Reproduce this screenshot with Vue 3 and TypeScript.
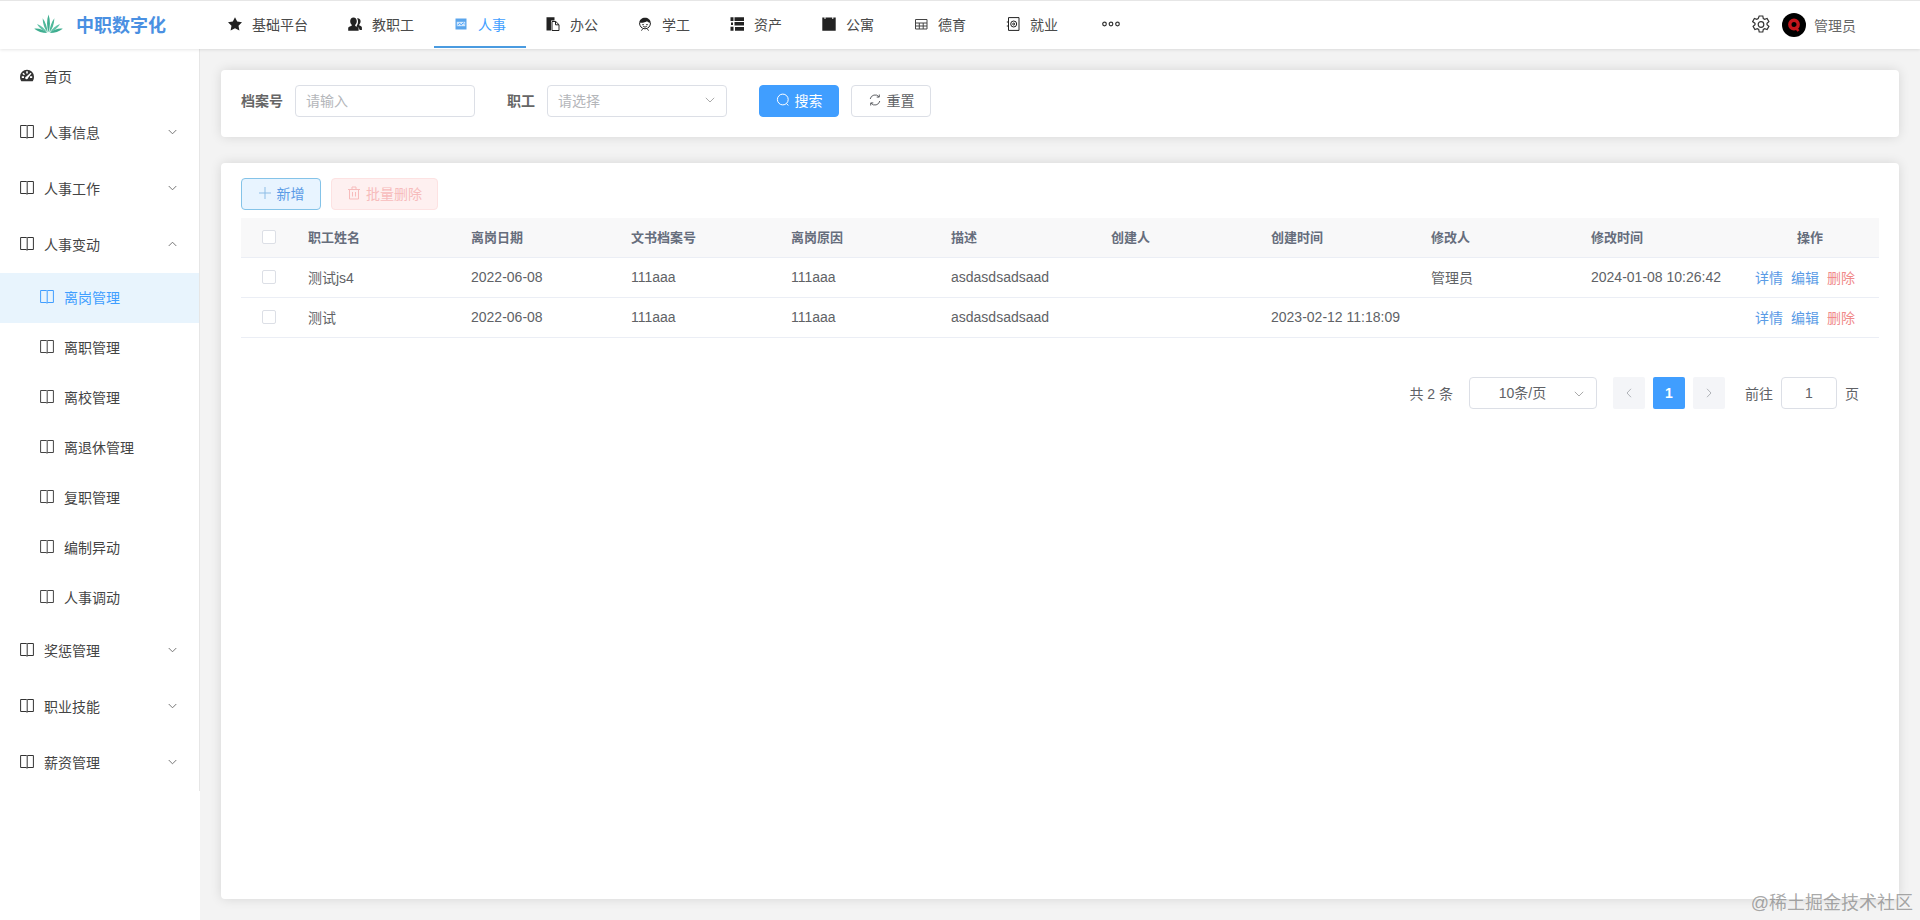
<script setup lang="ts">
interface IconPart {
  d: string
  stroke?: boolean
  color?: string
}

interface NavItem {
  label: string
  icon: string
  active?: boolean
}

interface SideItem {
  label: string
  icon?: string
  arrow?: 'up' | 'down'
  children?: { label: string; active?: boolean }[]
}

interface Row {
  name: string
  leaveDate: string
  archive: string
  reason: string
  desc: string
  creator: string
  createdAt: string
  editor: string
  editedAt: string
}

const icons: Record<string, IconPart[]> = {
  star: [{ d: 'M7 .2l2.200 4.400 4.800.7-3.500 3.400.9 4.900L7 11.300l-4.400 2.300.9-4.900L0 5.300l4.800-.7z' }],
  users: [
    { d: 'M5.500.5c2 0 3.300 1.500 3.300 3.600 0 1.600-.6 2.900-1.600 3.800v1c1.800.5 3.400 1.300 3.400 2.300v2.500H.2V11c0-1 1.700-1.800 3.500-2.300V7.800C2.700 7 2.200 5.700 2.200 4.100 2.200 2 3.500.5 5.500.5z' },
    { d: 'M9.700 1.200c1.800 0 2.900 1.300 2.900 3.100 0 1.300-.5 2.500-1.300 3.200v1c1.200.4 2.600 1.100 2.600 2v2.600h-2.300c0-1.700-1.100-2.700-2.800-3.400V8.400c.8-.9 1.200-2.400 1.200-4 0-1.100-.3-2.200-1-2.900z' },
  ],
  hr: [
    { d: 'M1.500 1.500h11v11h-11z', color: '#5aa5ec' },
    { d: 'M2.800 4.800h8.400v4.400H2.800z', color: '#d5e9fc' },
    { d: 'M3.500 8.300l2-2 1.800 1.500 2-2 1.300 1.200', stroke: true, color: '#409eff' },
  ],
  office: [
    { d: 'M.5.300h8v3.200H5v10H.5z' },
    { d: 'M6 4.500h3.800L13 7.700v5.800H6zM9.500 4.500v3.300H13', stroke: true },
  ],
  student: [
    { d: 'M7 .8c3 0 5.500 2 5.800 5-1.500.2-3-.5-3.800-1.500-1 1-4 1.700-7.800 1.500C1.500 2.800 4 .8 7 .8z' },
    { d: 'M1.500 5.800c0 3.400 2.200 6 5.500 6s5.500-2.600 5.500-6M4.500 12.100l-1 1.500M9.500 12.100l1 1.500M5.300 9.400c1 .8 2.400.8 3.400 0', stroke: true },
    { d: 'M4.400 7h1.300v1.300H4.400zM8.300 7h1.300v1.300H8.300z' },
  ],
  assets: [{ d: 'M.5.300h3v3.700h-3zM4.500.300h9.500v3.700H4.500zM1 5.500h2v2.500H1zM4.500 5h9.500v3.500H4.500zM.5 9.800h3v3.900h-3zM5 10h9v3.700H5z' }],
  dorm: [{ d: 'M.3.600h2.200v1.400h1V.6h6.800v1.400h1V.6h2.400v13.200H.3z' }],
  moral: [{ d: 'M1.500 2.500h11.500v9.500H1.500zM1.500 6h11.500M1.500 9h11.500M5.300 6v6M9.200 6v6', stroke: true, color: '#444' }],
  job: [
    { d: 'M2.500.6h10.500v12.800H2.500zM.8 5h2.200M.8 9h2.200', stroke: true },
    { d: 'M7.700 4a3 3 0 1 1 0 6 3 3 0 0 1 0-6zM7.700 6a1 1 0 1 0 0 2 1 1 0 0 0 0-2z', stroke: true },
  ],
  gauge: [
    { d: 'M7 .8a7 7 0 0 1 7 7c0 1.800-.5 3.200-1.300 4.400H1.300A7 7 0 0 1 0 7.800 7 7 0 0 1 7 .8z' },
    { d: 'M6.200 2.300h1.600v2.200H6.200zM1.800 7.300h2.200v1.600H1.800zM10 7.300h2.200v1.600H10zM3.400 3.700l1.600 1.500-1 1.100-1.600-1.500zM10.600 3.700l.9.900-3.500 4.400a1.400 1.400 0 1 1-1.600-1.500z', color: '#fff' },
  ],
  book: [
    { d: 'M.6.500h5.800c.3 0 .5.100.6.300.1-.2.300-.3.600-.3h5.800v12H8c-.5 0-.8.200-1 .8-.2-.6-.5-.8-1-.8H.6zM7.200 1v11.800', stroke: true },
  ],
}

const navItems: NavItem[] = [
  { label: '基础平台', icon: 'star' },
  { label: '教职工', icon: 'users' },
  { label: '人事', icon: 'hr', active: true },
  { label: '办公', icon: 'office' },
  { label: '学工', icon: 'student' },
  { label: '资产', icon: 'assets' },
  { label: '公寓', icon: 'dorm' },
  { label: '德育', icon: 'moral' },
  { label: '就业', icon: 'job' },
]

const sideItems: SideItem[] = [
  { label: '首页', icon: 'gauge' },
  { label: '人事信息', arrow: 'down' },
  { label: '人事工作', arrow: 'down' },
  {
    label: '人事变动',
    arrow: 'up',
    children: [
      { label: '离岗管理', active: true },
      { label: '离职管理' },
      { label: '离校管理' },
      { label: '离退休管理' },
      { label: '复职管理' },
      { label: '编制异动' },
      { label: '人事调动' },
    ],
  },
  { label: '奖惩管理', arrow: 'down' },
  { label: '职业技能', arrow: 'down' },
  { label: '薪资管理', arrow: 'down' },
]

const columns = ['职工姓名', '离岗日期', '文书档案号', '离岗原因', '描述', '创建人', '创建时间', '修改人', '修改时间']

const rows: Row[] = [
  {
    name: '测试js4',
    leaveDate: '2022-06-08',
    archive: '111aaa',
    reason: '111aaa',
    desc: 'asdasdsadsaad',
    creator: '',
    createdAt: '',
    editor: '管理员',
    editedAt: '2024-01-08 10:26:42',
  },
  {
    name: '测试',
    leaveDate: '2022-06-08',
    archive: '111aaa',
    reason: '111aaa',
    desc: 'asdasdsadsaad',
    creator: '',
    createdAt: '2023-02-12 11:18:09',
    editor: '',
    editedAt: '',
  },
]

const rowCells = (row: Row) => [
  row.name,
  row.leaveDate,
  row.archive,
  row.reason,
  row.desc,
  row.creator,
  row.createdAt,
  row.editor,
  row.editedAt,
]
</script>

<template>
  <div class="page">
    <header class="topbar">
      <div class="brand">
        <svg class="brand-logo" viewBox="0 0 30 20">
          <path d="M15 19.500C13 13 13 6 15 .5c2 5.500 2 12.500 0 19z" fill="#3fae90" />
          <path d="M14.200 19.500C11 16 9 11 8.800 4.500c2.800 3.500 4.700 9 5.400 15z" fill="#4fb89a" />
          <path d="M15.800 19.500c3.200-3.500 5.200-8.500 5.400-15-2.800 3.500-4.700 9-5.400 15z" fill="#4fb89a" />
          <path d="M13.800 19.700C9.500 18 5 14.500 3 10.500c4.500 2 8.200 5 10.800 9.200z" fill="#62c2a8" />
          <path d="M16.200 19.700c4.300-1.700 8.800-5.200 10.800-9.200-4.500 2-8.200 5-10.800 9.200z" fill="#62c2a8" />
          <path d="M13.500 20C8.500 20 3.500 18.300 0 15.500c5-.6 9.800 1.200 13.500 4.500z" fill="#3fae90" />
          <path d="M16.500 20c5 0 10-1.700 13.500-4.500-5-.6-9.800 1.200-13.500 4.500z" fill="#3fae90" />
        </svg>
        <span class="brand-name">中职数字化</span>
      </div>
      <nav class="nav">
        <a v-for="item in navItems" :key="item.label" class="nav-item" :class="{ active: item.active }">
          <svg class="icon" viewBox="0 0 14 14">
            <path
              v-for="part in icons[item.icon]"
              :key="part.d"
              :d="part.d"
              :fill="part.stroke ? 'none' : part.color || 'currentColor'"
              :stroke="part.stroke ? part.color || 'currentColor' : 'none'"
              fill-rule="evenodd"
            />
          </svg>
          <span>{{ item.label }}</span>
        </a>
        <a class="nav-item">
          <svg class="more" viewBox="0 0 18 6">
            <circle cx="2.500" cy="3" r="1.800" />
            <circle cx="9" cy="3" r="1.800" />
            <circle cx="15.500" cy="3" r="1.800" />
          </svg>
        </a>
      </nav>
      <div class="user">
        <svg class="gear" viewBox="0 0 18 20">
          <path d="M7.200 1h3.600l.5 2.500 1.400.8 2.400-.8 1.800 3.100-1.900 1.700v1.400l1.900 1.700-1.800 3.100-2.400-.8-1.400.8-.5 2.500H7.200l-.5-2.500-1.400-.8-2.400.8-1.800-3.100 1.900-1.700V8.300L.6 6.600l1.800-3.100 2.400.8 1.400-.8z" />
          <circle cx="9" cy="9.500" r="2.800" />
        </svg>
        <svg class="avatar" viewBox="0 0 24 24">
          <circle cx="12" cy="12" r="12" fill="#000" />
          <circle cx="12" cy="11.500" r="4.200" fill="none" stroke="#c4161c" stroke-width="3.400" />
          <path d="M13 14l3.500 4" stroke="#c4161c" stroke-width="2.500" />
        </svg>
        <span class="user-name">管理员</span>
      </div>
    </header>

    <div class="body">
      <aside class="aside">
        <ul class="menu">
          <template v-for="item in sideItems" :key="item.label">
            <li class="menu-item">
              <svg class="icon" viewBox="0 0 14 14">
                <path
                  v-for="part in icons[item.icon || 'book']"
                  :key="part.d"
                  :d="part.d"
                  :fill="part.stroke ? 'none' : part.color || 'currentColor'"
                  :stroke="part.stroke ? part.color || 'currentColor' : 'none'"
                  fill-rule="evenodd"
                />
              </svg>
              <span>{{ item.label }}</span>
              <svg v-if="item.arrow" class="arrow" :class="{ up: item.arrow === 'up' }" viewBox="0 0 10 6">
                <path d="M.8.8L5 5l4.200-4.200" />
              </svg>
            </li>
            <li
              v-for="child in item.children"
              :key="child.label"
              class="menu-child"
              :class="{ active: child.active }"
            >
              <svg class="icon" viewBox="0 0 14 14">
                <path v-for="part in icons.book" :key="part.d" :d="part.d" fill="none" stroke="currentColor" />
              </svg>
              <span>{{ child.label }}</span>
            </li>
          </template>
        </ul>
      </aside>

      <main class="main">
        <section class="card search-card">
          <label class="field-label">档案号</label>
          <div class="input input-wide">请输入</div>
          <label class="field-label field-gap">职工</label>
          <div class="input input-wide">
            请选择
            <svg class="arrow select-arrow" viewBox="0 0 10 6"><path d="M.8.8L5 5l4.200-4.200" /></svg>
          </div>
          <button class="btn btn-primary search-btn">
            <svg class="btn-icon" viewBox="0 0 14 14">
              <circle cx="6.800" cy="6.500" r="5.400" />
              <path d="M10.500 10.500l1.800 2" />
            </svg>
            搜索
          </button>
          <button class="btn">
            <svg class="btn-icon" viewBox="0 0 14 14">
              <path d="M2.200 6A5 5 0 0 1 11 3.800M11.800 8A5 5 0 0 1 3 10.200M11.300 1.500v2.600H8.700M2.700 12.500V9.900h2.600" />
            </svg>
            重置
          </button>
        </section>

        <section class="card table-card">
          <div class="toolbar">
            <button class="btn btn-add">
              <svg class="btn-icon" viewBox="0 0 14 14"><path d="M7 1v12M1 7h12" /></svg>
              新增
            </button>
            <button class="btn btn-danger" disabled>
              <svg class="btn-icon" viewBox="0 0 14 14">
                <path d="M2.500 3.500h9v9.500h-9zM1 3.500h12M5 3.500V1h4v2.500M5.500 6v4.500M8.500 6v4.500" />
              </svg>
              批量删除
            </button>
          </div>

          <table class="table">
            <colgroup>
              <col class="col-check" />
              <col class="col-name" />
              <col v-for="n in 8" :key="n" class="col-text" />
              <col />
            </colgroup>
            <thead>
              <tr>
                <th class="cell-check"><span class="checkbox" /></th>
                <th v-for="col in columns" :key="col">{{ col }}</th>
                <th class="cell-ops">操作</th>
              </tr>
            </thead>
            <tbody>
              <tr v-for="row in rows" :key="row.name">
                <td class="cell-check"><span class="checkbox" /></td>
                <td v-for="(cell, i) in rowCells(row)" :key="i">{{ cell }}</td>
                <td class="ops">
                  <a class="link">详情</a>
                  <a class="link">编辑</a>
                  <a class="link link-danger">删除</a>
                </td>
              </tr>
            </tbody>
          </table>

          <div class="pagination">
            <span>共 2 条</span>
            <div class="input page-size">
              10条/页
              <svg class="arrow select-arrow" viewBox="0 0 10 6"><path d="M.8.8L5 5l4.200-4.200" /></svg>
            </div>
            <div class="pager">
              <span class="page-btn">
                <svg class="page-arrow" viewBox="0 0 6 10"><path d="M5 .8L1 5l4 4.200" /></svg>
              </span>
              <span class="page-btn current">1</span>
              <span class="page-btn">
                <svg class="page-arrow" viewBox="0 0 6 10"><path d="M1 .8L5 5 1 9.200" /></svg>
              </span>
            </div>
            <span class="jump-label">前往</span>
            <div class="input page-input">1</div>
            <span>页</span>
          </div>
        </section>
      </main>
    </div>

    <div class="watermark">@稀土掘金技术社区</div>
  </div>
</template>

<style>
html,
body {
  margin: 0;
  background: #f3f3f3;
}
</style>

<style scoped>
.page {
  position: relative;
  display: flex;
  flex-direction: column;
  height: 920px;
  overflow: hidden;
  font-family: 'Liberation Sans', 'Noto Sans CJK SC', sans-serif;
  font-size: 14px;
  color: #606266;
}

.topbar {
  display: flex;
  align-items: flex-start;
  flex: none;
  height: 48px;
  background: #fff;
  border-top: 1px solid #e6e6e6;
  box-shadow: 0 1px 3px rgba(0, 0, 0, 0.1);
  position: relative;
  z-index: 2;
}

.brand {
  display: flex;
  align-items: center;
  width: 208px;
  height: 47px;
  padding: 0 0 2px 34px;
  box-sizing: border-box;
}

.brand-logo {
  width: 29px;
  height: 19px;
}

.brand-name {
  margin-left: 13px;
  font-size: 18px;
  font-weight: 700;
  color: #4a90e2;
  white-space: nowrap;
}

.nav {
  display: flex;
}

.nav-item {
  display: flex;
  align-items: center;
  gap: 10px;
  height: 45px;
  padding: 0 20px;
  border-bottom: 2px solid transparent;
  color: #4a4a4a;
}

.nav-item .icon {
  color: #222;
}

.nav-item.active {
  color: #409eff;
  border-bottom-color: #4a9be0;
}

.icon {
  flex: none;
  width: 14px;
  height: 14px;
}

.more {
  width: 18px;
  height: 6px;
  margin-left: 4px;
  fill: none;
  stroke: #333;
  stroke-width: 1.200;
}

.user {
  display: flex;
  align-items: center;
  margin-left: auto;
  height: 47px;
  padding-right: 64px;
}

.gear {
  width: 18px;
  height: 20px;
  fill: none;
  stroke: #333;
  stroke-width: 1.200;
}

.avatar {
  width: 24px;
  height: 24px;
  margin-left: 12px;
}

.user-name {
  margin-left: 8px;
  color: #666;
}

.body {
  display: flex;
  flex: 1;
  min-height: 0;
}

.aside {
  flex: none;
  width: 200px;
  background: #fff;
}

.menu {
  width: 200px;
  margin: 0;
  padding: 0;
  list-style: none;
  border-right: 1px solid #e6e6e6;
  box-sizing: border-box;
}

.menu-item,
.menu-child {
  display: flex;
  align-items: center;
  gap: 10px;
  color: #444;
  box-sizing: border-box;
}

.menu-item {
  height: 56px;
  padding: 0 22px 2px 20px;
}

.menu-child {
  height: 50px;
  padding: 0 0 2px 40px;
}

.menu-child.active {
  color: #409eff;
  background: #e8f4fd;
}

.menu-item .icon {
  color: #333;
}

.arrow {
  width: 9px;
  height: 6px;
  margin-left: auto;
  fill: none;
  stroke: #666;
  stroke-width: 1;
}

.arrow.up {
  transform: rotate(180deg);
}

.main {
  flex: 1;
  min-width: 0;
  display: flex;
  flex-direction: column;
  gap: 26px;
  padding: 21px;
  background: #f3f3f3;
}

.card {
  background: #fff;
  border-radius: 4px;
  box-shadow: 0 0 12px rgba(0, 0, 0, 0.12);
}

.search-card {
  display: flex;
  align-items: center;
  height: 67px;
  padding: 15px 20px 20px;
  box-sizing: border-box;
}

.field-label {
  margin-right: 12px;
  padding-bottom: 2px;
  font-weight: 700;
  color: #666;
}

.field-gap {
  margin-left: 32px;
}

.input {
  display: flex;
  align-items: center;
  height: 32px;
  border: 1px solid #dcdfe6;
  border-radius: 4px;
  box-sizing: border-box;
  background: #fff;
}

.input-wide {
  width: 180px;
  padding: 0 11px 2px 10px;
  color: #b4b6ba;
}

.select-arrow {
  margin-left: auto;
  width: 10px;
  stroke: #aaa;
}

.btn {
  display: inline-flex;
  align-items: center;
  justify-content: center;
  gap: 5px;
  width: 80px;
  height: 32px;
  padding: 0 0 2px;
  border: 1px solid #dcdfe6;
  border-radius: 4px;
  background: #fff;
  color: #606266;
  font: inherit;
}

.btn-icon {
  width: 14px;
  height: 14px;
  fill: none;
  stroke: currentColor;
  stroke-width: 1;
}

.btn-primary {
  background: #409eff;
  border-color: #409eff;
  color: #fff;
}

.search-btn {
  margin-left: 32px;
  margin-right: 12px;
}

.table-card {
  flex: 1;
  min-height: 0;
  padding: 15px 20px;
}

.toolbar {
  display: flex;
  gap: 10px;
  margin-bottom: 8px;
}

.btn-add {
  background: #e8f4ff;
  border-color: #84c3e8;
  color: #5a9be6;
}

.btn-add .btn-icon {
  color: #8dbde6;
}

.btn-danger {
  width: 107px;
  background: #fef0f0;
  border-color: #fde2e2;
  color: #f7bcbc;
}

.table {
  width: 1638px;
  border-collapse: collapse;
  table-layout: fixed;
}

.col-check {
  width: 57px;
}

.col-name {
  width: 163px;
}

.col-text {
  width: 160px;
}

.table th,
.table td {
  height: 40px;
  box-sizing: border-box;
  padding: 0 0 1px 10px;
  text-align: left;
  border-bottom: 1px solid #ebeef5;
  white-space: nowrap;
  overflow: hidden;
}

.table th {
  height: 39px;
  padding-bottom: 2px;
  background: #f8f8f9;
  font-size: 13px;
  font-weight: 700;
  color: #666d7c;
}

.table .cell-check {
  padding: 0 0 0 21px;
}

.table .cell-ops {
  text-align: center;
  padding: 0 0 2px;
}

.checkbox {
  display: block;
  width: 14px;
  height: 14px;
  border: 1px solid #dcdfe6;
  border-radius: 2px;
  box-sizing: border-box;
  background: #fff;
}

.table .ops {
  padding-left: 14px;
}

.link {
  color: #5a9be6;
  margin-right: 8px;
}

.link-danger {
  color: #f08a8a;
  margin-right: 0;
}

.pagination {
  display: flex;
  align-items: center;
  justify-content: flex-end;
  margin-top: 39px;
  padding-right: 20px;
  height: 32px;
}

.page-size {
  position: relative;
  justify-content: center;
  width: 128px;
  margin-left: 16px;
  padding: 0 21px 2px 0;
  color: #606266;
}

.page-size .select-arrow {
  position: absolute;
  right: 12px;
  top: 13px;
}

.pager {
  display: flex;
  gap: 8px;
  margin-left: 16px;
}

.page-btn {
  display: flex;
  align-items: center;
  justify-content: center;
  width: 32px;
  height: 32px;
  border-radius: 2px;
  background: #f4f5f8;
  box-sizing: border-box;
}

.page-btn.current {
  background: #409eff;
  color: #fff;
  font-weight: 700;
}

.page-arrow {
  width: 6px;
  height: 10px;
  fill: none;
  stroke: #b0b3b8;
  stroke-width: 1;
}

.jump-label {
  margin-left: 20px;
  margin-right: 8px;
}

.page-input {
  justify-content: center;
  width: 56px;
  margin-right: 8px;
}

.watermark {
  position: absolute;
  right: 7px;
  bottom: 6px;
  font-size: 18px;
  line-height: 22px;
  color: rgba(120, 120, 120, 0.65);
  white-space: nowrap;
  pointer-events: none;
}
</style>
